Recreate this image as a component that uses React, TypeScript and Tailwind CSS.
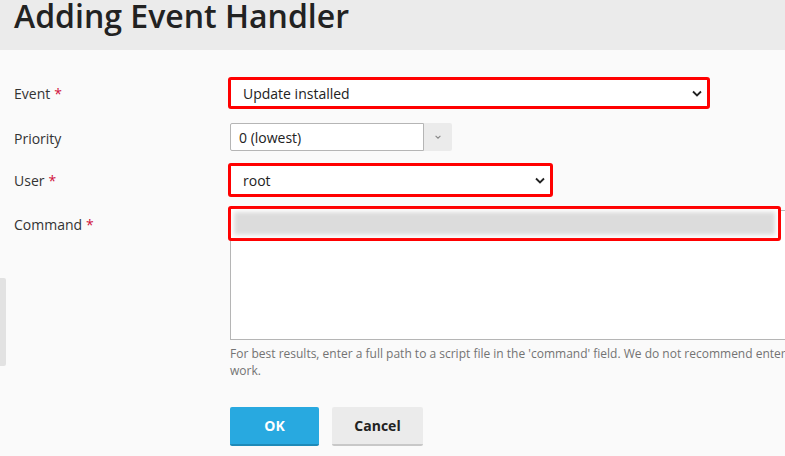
import React from "react";

const font = { fontFamily: '"Open Sans", "Liberation Sans", sans-serif' };

function Chevron({ className = "" }: { className?: string }) {
  return (
    <svg viewBox="0 0 10 6" className={className} fill="none" stroke="currentColor" strokeWidth="1.8">
      <path d="M1 1l4 4 4-4" />
    </svg>
  );
}

function Label({ text, req }: { text: string; req?: boolean }) {
  return (
    <div className="w-[216px] shrink-0 text-[14px] text-[#333]">
      {text}
      {req && <span className="text-[#d0103a] ml-1">*</span>}
    </div>
  );
}

export default function App() {
  return (
    <div className="w-[785px] h-[456px] overflow-hidden bg-[#fafafa] relative" style={font}>
      <div className="h-[50px] bg-[#ebebeb] pl-[14px] flex items-start">
        <h1 className="text-[32px] leading-[38px] text-[#222] font-semibold -mt-[3px]">Adding Event Handler</h1>
      </div>
      <div className="absolute left-0 top-[278px] w-[6px] h-[88px] bg-[#e2e2e2] rounded-r-[2px]" />
      <div className="pl-[14px] pt-[27px] flex flex-col">
        {/* Event */}
        <div className="flex items-start h-[46px]">
          <div className="pt-[6px]"><Label text="Event" req /></div>
          <div className="-ml-[2px] w-[482px] h-[32px] border-[3px] border-[#ff0000] rounded-[3px] bg-white flex items-center pl-[12px] pr-[5px] text-[14px] text-[#222]">
            <span className="flex-1">Update installed</span>
            <Chevron className="w-[10px] h-[7px] text-[#222]" />
          </div>
        </div>
        {/* Priority */}
        <div className="flex items-start h-[40px]">
          <div className="pt-[5px]"><Label text="Priority" /></div>
          <div className="flex h-[28px] w-[222px]">
            <div className="w-[194px] h-full bg-white border border-[#b5b5b5] rounded-l-[2px] flex items-center pl-[8px] text-[14px] text-[#222]">0 (lowest)</div>
            <div className="flex-1 h-full bg-[#ebebeb] flex items-center justify-center rounded-r-[2px]">
              <Chevron className="w-[6px] h-[4px] text-[#888]" />
            </div>
          </div>
        </div>
        {/* User */}
        <div className="flex items-start h-[43px]">
          <div className="pt-[7px]"><Label text="User" req /></div>
          <div className="-ml-[2px] w-[325px] h-[34px] border-[3px] border-[#ff0000] rounded-[3px] bg-white flex items-center pl-[12px] pr-[5px] text-[14px] text-[#222]">
            <span className="flex-1">root</span>
            <Chevron className="w-[10px] h-[7px] text-[#222]" />
          </div>
        </div>
        {/* Command */}
        <div className="flex items-start">
          <div className="pt-[8px]"><Label text="Command" req /></div>
          <div className="relative w-[560px] h-[134px]">
            <div className="absolute left-0 top-[4px] w-[600px] h-[130px] bg-white border border-[#b5b5b5]" />
            <div className="absolute -left-[2px] top-0 w-[553px] h-[35px] border-[3px] border-[#ff0000] rounded-[3px] bg-white p-[3px]">
              <div className="w-full h-full bg-[#dcdcdc] blur-[2px]" />
            </div>
          </div>
        </div>
        <div className="ml-[216px] mt-[5px] text-[12px] leading-[17px] text-[#737373] whitespace-nowrap">
          <div>For best results, enter a full path to a script file in the 'command' field. We do not recommend entering commands directly, as they may not</div>
          <div>work.</div>
        </div>
        <div className="ml-[216px] mt-[28px] flex gap-[13px]">
          <button className="w-[89px] h-[39px] bg-[#28a9e0] rounded-[2px] border-b-2 border-[#1e8ab8] text-white text-[14px] font-bold">OK</button>
          <button className="w-[91px] h-[39px] bg-[#ebebeb] rounded-[2px] border-b-2 border-[#c8c8c8] text-[#222] text-[14px] font-bold">Cancel</button>
        </div>
      </div>
    </div>
  );
}
